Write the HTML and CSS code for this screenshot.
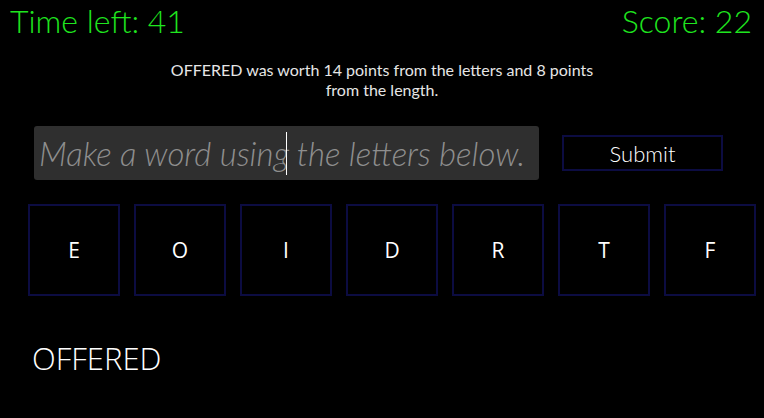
FILE: index.html
```html
<!DOCTYPE html>
<html>
<head>
<meta charset="utf-8">
<link rel="stylesheet" href="styles.css">
</head>
<body>
<div class="app">
  <header class="top">
    <div class="stat">Time left: 41</div>
    <div class="stat">Score: 22</div>
  </header>
  <p class="message">OFFERED was worth 14 points from the letters and 8 points from the length.</p>
  <div class="entry">
    <div class="word-input">
      <span class="placeholder">Make a word using the letters below.</span>
      <span class="caret"></span>
    </div>
    <button class="submit">Submit</button>
  </div>
  <div class="tiles">
    <div class="tile">E</div>
    <div class="tile">O</div>
    <div class="tile">I</div>
    <div class="tile">D</div>
    <div class="tile">R</div>
    <div class="tile">T</div>
    <div class="tile">F</div>
  </div>
  <div class="found">OFFERED</div>
</div>
</body>
</html>
```
FILE: styles.css
```css
html, body {
  margin: 0;
  padding: 0;
  background: #000;
}
.app {
  width: 764px;
  height: 418px;
  font-family: "Lato", "Open Sans", sans-serif;
  color: #fff;
  overflow: hidden;
}
.top {
  display: flex;
  justify-content: space-between;
  padding: 0 12px 0 10px;
  height: 42px;
  align-items: center;
}
.stat {
  color: #1fe51f;
  font-size: 32px;
  font-weight: 300;
  line-height: 42px;
}
.message {
  margin: 18px auto 0;
  width: 450px;
  text-align: center;
  font-size: 16px;
  line-height: 20px;
  color: #e6e6e6;
  font-weight: 400;
}
.entry {
  display: flex;
  align-items: center;
  gap: 23px;
  margin: 26px 0 0 34px;
}
.word-input {
  position: relative;
  width: 505px;
  height: 54px;
  background: #2f2f2f;
  border-radius: 3px;
  display: flex;
  align-items: center;
  padding-left: 5px;
  box-sizing: border-box;
  overflow: hidden;
}
.placeholder {
  font-style: italic;
  font-size: 33px;
  font-weight: 300;
  color: #8e8e8e;
  white-space: nowrap;
}
.caret {
  position: absolute;
  left: 252px;
  top: 6px;
  width: 1px;
  height: 43px;
  background: #fff;
}
.submit {
  width: 161px;
  height: 36px;
  background: #000;
  border: 2px solid #0c0c42;
  color: #fff;
  font-family: "Lato", "Open Sans", sans-serif;
  font-size: 22px;
  font-weight: 300;
  padding: 0;
}
.tiles {
  display: flex;
  gap: 14px;
  margin: 24px 0 0 28px;
}
.tile {
  width: 92px;
  height: 92px;
  box-sizing: border-box;
  border: 2px solid #0c0c42;
  display: flex;
  align-items: center;
  justify-content: center;
  font-family: "Open Sans", sans-serif;
  font-size: 21px;
  color: #fff;
}
.found {
  margin: 42px 0 0 32px;
  font-family: "Open Sans", sans-serif;
  font-weight: 300;
  font-size: 31px;
  line-height: 40px;
  color: #fff;
}
```
